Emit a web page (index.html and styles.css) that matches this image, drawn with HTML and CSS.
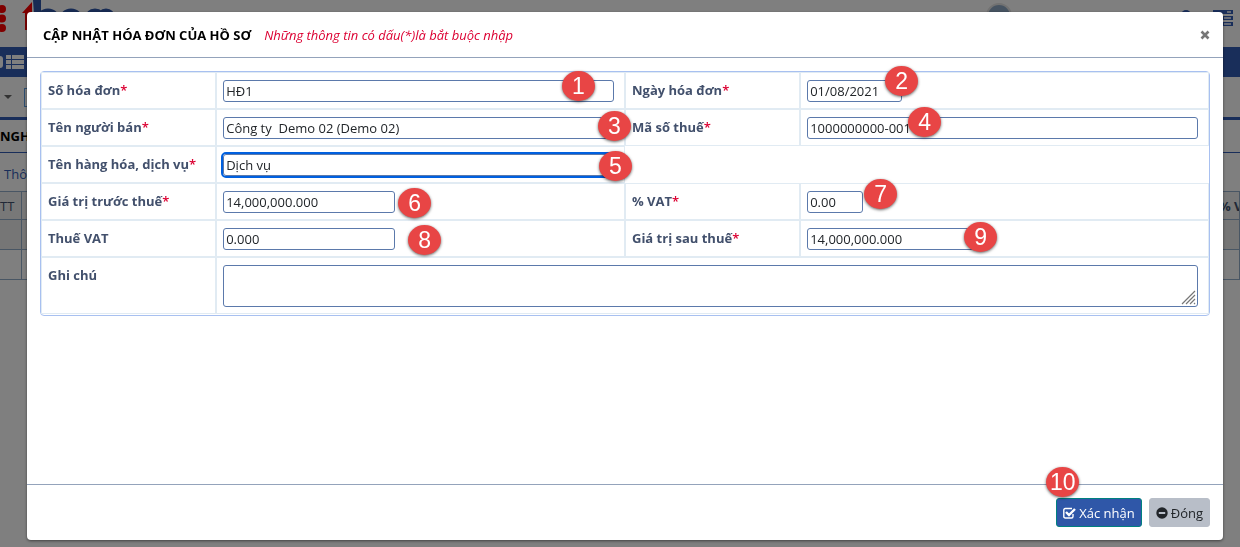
FILE: index.html
```html
<!DOCTYPE html>
<html lang="vi">
<head>
    <meta charset="UTF-8">
    <meta name="viewport" content="width=device-width, initial-scale=1.0">
    <title>Cập nhật hóa đơn của hồ sơ</title>
    <link rel="stylesheet" href="styles.css">
</head>
<body>
    <div class="page">
        <header class="topbar">
            <svg class="logo" width="120" height="40" viewBox="0 0 120 40" aria-hidden="true">
                <g fill="#ff0000">
                    <circle cx="2" cy="9" r="4"/>
                    <circle cx="2" cy="18.500" r="4"/>
                    <circle cx="2" cy="28" r="4"/>
                    <path d="M22 13L32 2V13H30V30H25V13Z"/>
                </g>
                <path d="M33 0H41V11L44 30H38L34 14Z" fill="#2f57a8"/>
                <g fill="none" stroke="#2f57a8" stroke-width="7">
                    <circle cx="48" cy="21" r="9"/>
                    <circle cx="71" cy="21" r="9"/>
                    <path d="M89 30V19Q89 12 95 12T101 19V30M101 19Q101 12 106 12T112 19V30"/>
                </g>
            </svg>
            <div class="topbar-right">
                <span class="avatar"></span>
                <svg width="60" height="30" viewBox="0 0 60 30" aria-hidden="true">
                    <circle cx="6" cy="15" r="5" fill="#335cb5"/>
                    <path d="M33 10H53V14H33ZM33 16H53V20H33ZM33 22H53V26H33Z" fill="#335cb5"/>
                    <path d="M47 12H51M44 18H51M44 24H51" stroke="#fff" stroke-width="1.5"/>
                </svg>
            </div>
        </header>
        <nav class="navbar">
            <span class="nav-dot"></span>
            <svg width="18" height="14" viewBox="0 0 18 14" fill="#fff" aria-hidden="true">
                <path d="M0 0h5v4H0zM6 0h12v4H6zM0 5h5v4H0zM6 5h12v4H6zM0 10h5v4H0zM6 10h12v4H6z"/>
            </svg>
        </nav>
        <div class="toolbar">
            <span class="caret"></span>
            <span class="tool-box"></span>
        </div>
        <div class="section-title">NGH</div>
        <div class="tabs">Thô</div>
        <table class="grid">
            <tr><th class="grid-no">TT</th><th></th><th class="grid-vat">% VAT</th></tr>
            <tr class="odd"><td></td><td></td><td></td></tr>
            <tr><td></td><td></td><td></td></tr>
        </table>
    </div>

    <div class="backdrop"></div>

    <form class="modal" role="dialog" aria-labelledby="modal-title">
        <div class="modal-header">
            <h1 id="modal-title">CẬP NHẬT HÓA ĐƠN CỦA HỒ SƠ</h1>
            <span class="note">Những thông tin có dấu(*)là bắt buộc nhập</span>
            <button type="button" class="close" aria-label="Đóng">
                <svg width="10" height="10" viewBox="0 0 10 10" aria-hidden="true"><path d="M1.5 1.5L8.5 8.5M8.5 1.5L1.5 8.5"/></svg>
            </button>
        </div>

        <div class="modal-body">
            <div class="panel">
                <table class="form-table">
                    <colgroup>
                        <col class="col-label"><col class="col-field"><col class="col-label"><col class="col-field">
                    </colgroup>
                    <tr>
                        <th><label for="so">Số hóa đơn<em>*</em></label></th>
                        <td><input type="text" id="so" value="HĐ1"><span class="mark mark-1">1</span></td>
                        <th><label for="ngay">Ngày hóa đơn<em>*</em></label></th>
                        <td><input type="text" id="ngay" class="w-date" value="01/08/2021"><span class="mark mark-2">2</span></td>
                    </tr>
                    <tr>
                        <th><label for="ban">Tên người bán<em>*</em></label></th>
                        <td><input type="text" id="ban" value="Công ty  Demo 02 (Demo 02)"><span class="mark mark-3">3</span></td>
                        <th><label for="mst">Mã số thuế<em>*</em></label></th>
                        <td><input type="text" id="mst" value="1000000000-001"><span class="mark mark-4">4</span></td>
                    </tr>
                    <tr>
                        <th><label for="hang">Tên hàng hóa, dịch vụ<em>*</em></label></th>
                        <td><input type="text" id="hang" class="active" value="Dịch vụ"><span class="mark mark-5">5</span></td>
                    </tr>
                    <tr>
                        <th><label for="truoc">Giá trị trước thuế<em>*</em></label></th>
                        <td><input type="text" id="truoc" class="w-money" value="14,000,000.000"><span class="mark mark-6">6</span></td>
                        <th><label for="vat">% VAT<em>*</em></label></th>
                        <td><input type="text" id="vat" class="w-rate" value="0.00"><span class="mark mark-7">7</span></td>
                    </tr>
                    <tr>
                        <th><label for="thue">Thuế VAT</label></th>
                        <td><input type="text" id="thue" class="w-money" value="0.000"><span class="mark mark-8">8</span></td>
                        <th><label for="sau">Giá trị sau thuế<em>*</em></label></th>
                        <td><input type="text" id="sau" class="w-money" value="14,000,000.000"><span class="mark mark-9">9</span></td>
                    </tr>
                    <tr>
                        <th><label for="ghichu">Ghi chú</label></th>
                        <td colspan="3">
                            <textarea id="ghichu"></textarea>
                            <svg class="grip" width="15" height="15" viewBox="0 0 15 15" aria-hidden="true">
                                <path d="M1 14L14 1M5 14L14 5M9 14L14 9M13 14L14 13"/>
                            </svg>
                        </td>
                    </tr>
                </table>
            </div>
        </div>

        <div class="modal-footer">
            <button type="button" class="btn btn-primary">
                <svg width="13" height="12" viewBox="0 0 13 12" fill="none" stroke="currentColor" aria-hidden="true">
                    <path stroke-width="1.4" d="M10 7V9.5Q10 11 8.5 11H2.3Q.8 11 .8 9.5V3Q.8 1.5 2.3 1.5H9"/>
                    <path stroke-width="2.4" d="M3 5L6 8L12 2"/>
                </svg>
                Xác nhận
                <span class="mark mark-10">10</span>
            </button>
            <button type="button" class="btn btn-default">
                <svg width="12" height="12" viewBox="0 0 12 12" aria-hidden="true">
                    <circle cx="6" cy="6" r="5.7" fill="#212529"/>
                    <path d="M2.8 6H9.2" stroke="#b8bec8" stroke-width="2"/>
                </svg>
                Đóng
            </button>
        </div>
    </form>
</body>
</html>
```

FILE: styles.css
```css
* {
    box-sizing: border-box;
}

body {
    margin: 0;
    font-family: "Open Sans", "Noto Sans", sans-serif;
    font-size: 13px;
    line-height: 20px;
    color: #212529;
    background: #fff;
    overflow: hidden;
}

/* page behind the dialog */
.topbar {
    display: flex;
    justify-content: space-between;
    height: 47px;
}

.topbar-right {
    display: flex;
    gap: 168px;
}

.avatar {
    width: 26px;
    height: 26px;
    margin-top: 3px;
    border: 2px solid #e4e4e4;
    border-radius: 50%;
    background: #8fa9c4;
}

.navbar {
    display: flex;
    align-items: center;
    gap: 3px;
    height: 30px;
    background: #335cb5;
}

.nav-dot {
    width: 3px;
    height: 12px;
    border-radius: 0 6px 6px 0;
    background: #fff;
}

.toolbar {
    display: flex;
    align-items: center;
    gap: 12px;
    height: 43px;
    padding-left: 4px;
    border-bottom: 3px solid #335cb5;
}

.caret {
    border: 4px solid transparent;
    border-top-color: #666;
    border-bottom: 0;
}

.tool-box {
    width: 30px;
    height: 19px;
    border: 1px solid #5a9be0;
}

.section-title {
    height: 33px;
    padding-top: 6px;
    border-bottom: 1px solid #335cb5;
    font-weight: bold;
    color: #000;
}

.tabs {
    height: 38px;
    padding: 11px 4px 0;
    color: #335cb5;
}

.grid {
    width: 100%;
    table-layout: fixed;
    border-collapse: collapse;
}

.grid th,
.grid td {
    height: 30px;
    padding: 0;
    border: 1px solid #93acc9;
    border-left: 0;
    text-align: left;
}

.grid th {
    height: 28px;
    background: #f0f0f0;
    color: #40506e;
}

.grid .grid-no {
    width: 21px;
    font-weight: normal;
}

.grid .grid-vat {
    width: 21px;
    overflow: hidden;
    white-space: nowrap;
}

.grid .odd {
    background: #ececec;
}

.backdrop {
    position: fixed;
    inset: 0;
    background: rgba(0, 0, 0, 0.5);
}

/* dialog */
.modal {
    position: fixed;
    inset: 12px 17px 7px 27px;
    display: flex;
    flex-direction: column;
    border-radius: 4px;
    background: #fff;
    box-shadow: 0 1px 3px rgba(0, 0, 0, 0.5);
}

.modal-header {
    display: flex;
    align-items: center;
    gap: 13px;
    height: 46px;
    padding: 0 13px 0 16px;
    border-bottom: 1px solid #94a3bb;
}

h1 {
    margin: 0;
    font-size: 13px;
    color: #000;
}

.note {
    font-style: italic;
    color: #dc0032;
}

.close {
    display: flex;
    margin-left: auto;
    padding: 0;
    border: 0;
    background: none;
}

.close svg {
    fill: none;
    stroke: #777;
    stroke-width: 2.6;
}

.modal-body {
    flex: 1;
    padding: 13px;
}

.panel {
    padding-bottom: 1px;
    border: 1px solid #a8c0f0;
    border-radius: 4px;
}

.form-table {
    width: 100%;
    table-layout: fixed;
    border-spacing: 0;
}

.col-label {
    width: 15%;
}

.col-field {
    width: 35%;
}

.form-table th,
.form-table td {
    position: relative;
    padding: 7px 10px 6px 6px;
    border: 1px solid #e1ebf3;
    text-align: left;
    vertical-align: top;
}

.form-table label {
    color: #42506c;
}

em {
    font-style: normal;
    font-weight: 600;
    color: #dc0032;
}

input,
textarea {
    display: block;
    width: 100%;
    height: 22px;
    padding: 0 2px;
    border: 1px solid #5b79ab;
    border-radius: 3px;
    background: #fff;
    font: inherit;
    color: #212529;
}

textarea {
    height: 42px;
    resize: none;
}

.grip {
    position: absolute;
    right: 12px;
    bottom: 8px;
    fill: none;
    stroke: #777;
    stroke-width: 1.2;
}

.active {
    outline: 2px solid #0060df;
}

.w-date {
    width: 95px;
}

.w-money {
    width: 172px;
}

.w-rate {
    width: 56px;
}

.modal-footer {
    display: flex;
    justify-content: flex-end;
    gap: 7px;
    padding: 13px;
    border-top: 1px solid #94a3bb;
}

.btn {
    position: relative;
    display: flex;
    align-items: center;
    gap: 3px;
    height: 29px;
    padding: 0 6px;
    border: 1px solid #b8bec8;
    border-radius: 3px;
    background: #b8bec8;
    font: inherit;
    color: #212529;
}

.btn-primary {
    border-color: #008080;
    background: #2f57a8;
    color: #fff;
}

/* numbered step markers */
.mark {
    position: absolute;
    z-index: 1;
    width: 33px;
    height: 30px;
    border-radius: 50%;
    background: #e84545;
    box-shadow: 0 1px 3px rgba(0, 0, 0, 0.6);
    font-family: "Liberation Sans", Arial, sans-serif;
    font-size: 23px;
    line-height: 30px;
    text-align: center;
    color: #fff;
}

.mark-1 { right: 29px; top: -2px; }
.mark-2 { left: 84px; top: -7px; }
.mark-3 { right: -7px; top: 1px; }
.mark-4 { left: 107px; top: -3px; }
.mark-5 { right: -8px; top: 4px; }
.mark-6 { left: 181px; top: 4px; }
.mark-7 { left: 63px; top: -5px; }
.mark-8 { left: 191px; top: 4px; }
.mark-9 { left: 163px; top: 1px; }
.mark-10 { left: -11px; top: -32px; }
```
